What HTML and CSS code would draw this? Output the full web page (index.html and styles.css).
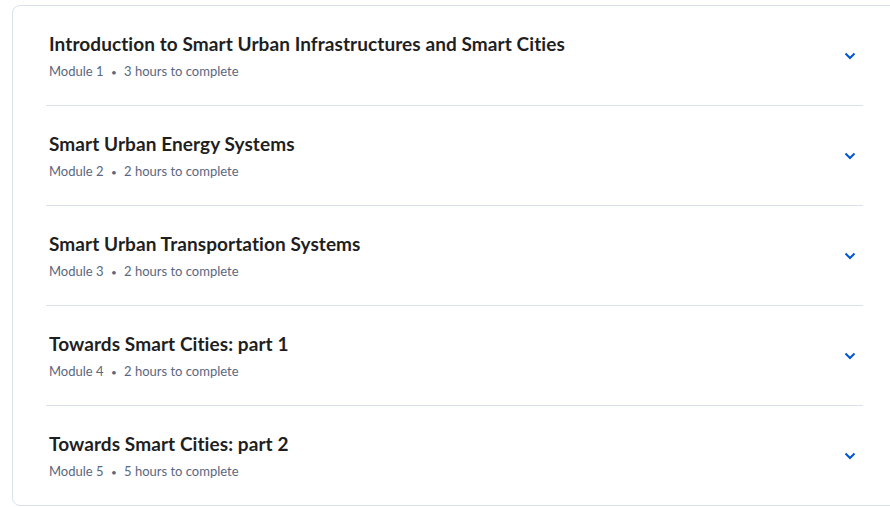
FILE: index.html
```html
<!DOCTYPE html>
<html>
<head>
  <title>Course Modules</title>
  <link rel="stylesheet" href="styles.css">
</head>
<body>
  <div class="modules-card">
    <ul class="module-list">
      <li class="module-item">
        <div class="module-info">
          <h3 class="module-title">Introduction to Smart Urban Infrastructures and Smart Cities</h3>
          <div class="module-meta">Module 1 <span class="dot">&bull;</span> 3 hours to complete</div>
        </div>
        <svg class="chevron" width="12" height="8" viewBox="0 0 12 8"><path d="M1.5 1.5 L6 6 L10.5 1.5"/></svg>
      </li>
      <li class="module-item">
        <div class="module-info">
          <h3 class="module-title">Smart Urban Energy Systems</h3>
          <div class="module-meta">Module 2 <span class="dot">&bull;</span> 2 hours to complete</div>
        </div>
        <svg class="chevron" width="12" height="8" viewBox="0 0 12 8"><path d="M1.5 1.5 L6 6 L10.5 1.5"/></svg>
      </li>
      <li class="module-item">
        <div class="module-info">
          <h3 class="module-title">Smart Urban Transportation Systems</h3>
          <div class="module-meta">Module 3 <span class="dot">&bull;</span> 2 hours to complete</div>
        </div>
        <svg class="chevron" width="12" height="8" viewBox="0 0 12 8"><path d="M1.5 1.5 L6 6 L10.5 1.5"/></svg>
      </li>
      <li class="module-item">
        <div class="module-info">
          <h3 class="module-title">Towards Smart Cities: part 1</h3>
          <div class="module-meta">Module 4 <span class="dot">&bull;</span> 2 hours to complete</div>
        </div>
        <svg class="chevron" width="12" height="8" viewBox="0 0 12 8"><path d="M1.5 1.5 L6 6 L10.5 1.5"/></svg>
      </li>
      <li class="module-item">
        <div class="module-info">
          <h3 class="module-title">Towards Smart Cities: part 2</h3>
          <div class="module-meta">Module 5 <span class="dot">&bull;</span> 5 hours to complete</div>
        </div>
        <svg class="chevron" width="12" height="8" viewBox="0 0 12 8"><path d="M1.5 1.5 L6 6 L10.5 1.5"/></svg>
      </li>
    </ul>
  </div>
</body>
</html>
```

FILE: styles.css
```css
:root {
  --text-primary: #1f1f1f;
  --text-secondary: #5b6780;
  --border-color: #dae1ed;
  --accent: #0056d2;
}

body {
  margin: 0;
  background: #ffffff;
  font-family: Lato, "Open Sans", sans-serif;
  color: var(--text-primary);
  overflow: hidden;
}

/* Card that wraps the whole module list */
.modules-card {
  margin: 5px 0 0 12px;
  width: 920px;
  border: 1px solid var(--border-color);
  border-radius: 8px;
  background: #ffffff;
}

.module-list {
  list-style: none;
  margin: 0;
  padding: 0 70px 0 33px;
}

.module-item {
  display: flex;
  align-items: center;
  justify-content: space-between;
  height: 99px;
  padding: 0 7px 0 3px;
  border-bottom: 1px solid var(--border-color);
}
.module-item:last-child {
  border-bottom: none;
}

.module-title {
  margin: 0;
  font-size: 19px;
  font-weight: 700;
  line-height: 26px;
  letter-spacing: 0.08px;
}

.module-meta {
  margin-top: 5px;
  font-size: 13px;
  line-height: 18px;
  color: var(--text-secondary);
}
.module-meta .dot {
  margin: 0 4px;
  font-size: 10px;
}

.chevron {
  flex-shrink: 0;
}
.chevron path {
  fill: none;
  stroke: var(--accent);
  stroke-width: 2;
}
```
